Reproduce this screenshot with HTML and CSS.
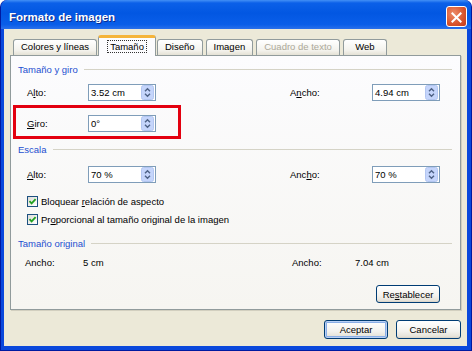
FILE: index.html
```html
<!DOCTYPE html>
<html lang="es">
<head>
    <meta charset="UTF-8">
    <title>Formato de imagen</title>
    <link rel="stylesheet" href="styles.css">
</head>
<body>
    <div class="window">
        <div class="titlebar">
            <span class="title">Formato de imagen</span>
            <span class="close">
                <svg width="21" height="21" viewBox="0 0 21 21"><path d="M6 6 L15 15 M15 6 L6 15" stroke="#fff" stroke-width="2.2" stroke-linecap="square"/></svg>
            </span>
        </div>

        <div class="client">
            <div class="tabs">
                <span class="tab">Colores y líneas</span>
                <span class="tab active"><span class="focus">Tamaño</span></span>
                <span class="tab">Diseño</span>
                <span class="tab">Imagen</span>
                <span class="tab disabled">Cuadro de texto</span>
                <span class="tab">Web</span>
            </div>

            <div class="panel">
                <div class="group first">Tamaño y giro</div>
                <div class="row">
                    <span>A<u>l</u>to:</span>
                    <div class="spin">3.52 cm <svg class="arrows" width="13" height="15" viewBox="0 0 13 15"><rect x=".5" y=".5" width="12" height="14" rx="2" fill="#c5d5fb" stroke="#b3c6f1"/><path d="M4 6.2 L6.5 3.8 L9 6.2 M4 8.8 L6.5 11.2 L9 8.8" stroke="#4d6185" stroke-width="1.4" fill="none"/></svg></div>
                    <span class="col-r">A<u>n</u>cho:</span>
                    <div class="spin">4.94 cm <svg class="arrows" width="13" height="15" viewBox="0 0 13 15"><rect x=".5" y=".5" width="12" height="14" rx="2" fill="#c5d5fb" stroke="#b3c6f1"/><path d="M4 6.2 L6.5 3.8 L9 6.2 M4 8.8 L6.5 11.2 L9 8.8" stroke="#4d6185" stroke-width="1.4" fill="none"/></svg></div>
                </div>
                <div class="row giro">
                    <span><u>G</u>iro:</span>
                    <div class="spin">0° <svg class="arrows" width="13" height="15" viewBox="0 0 13 15"><rect x=".5" y=".5" width="12" height="14" rx="2" fill="#c5d5fb" stroke="#b3c6f1"/><path d="M4 6.2 L6.5 3.8 L9 6.2 M4 8.8 L6.5 11.2 L9 8.8" stroke="#4d6185" stroke-width="1.4" fill="none"/></svg></div>
                </div>

                <div class="group">Escala</div>
                <div class="row">
                    <span><u>A</u>lto:</span>
                    <div class="spin">70 % <svg class="arrows" width="13" height="15" viewBox="0 0 13 15"><rect x=".5" y=".5" width="12" height="14" rx="2" fill="#c5d5fb" stroke="#b3c6f1"/><path d="M4 6.2 L6.5 3.8 L9 6.2 M4 8.8 L6.5 11.2 L9 8.8" stroke="#4d6185" stroke-width="1.4" fill="none"/></svg></div>
                    <span class="col-r">Anc<u>h</u>o:</span>
                    <div class="spin">70 % <svg class="arrows" width="13" height="15" viewBox="0 0 13 15"><rect x=".5" y=".5" width="12" height="14" rx="2" fill="#c5d5fb" stroke="#b3c6f1"/><path d="M4 6.2 L6.5 3.8 L9 6.2 M4 8.8 L6.5 11.2 L9 8.8" stroke="#4d6185" stroke-width="1.4" fill="none"/></svg></div>
                </div>
                <div class="check first-check">
                    <span class="box"><svg width="9" height="9" viewBox="0 0 9 9"><path d="M1.5 4.2 L3.6 6.4 L7.6 2.2" stroke="#21a121" stroke-width="1.8" fill="none"/></svg></span>
                    <span>Bloquear <u>r</u>elación de aspecto</span>
                </div>
                <div class="check">
                    <span class="box"><svg width="9" height="9" viewBox="0 0 9 9"><path d="M1.5 4.2 L3.6 6.4 L7.6 2.2" stroke="#21a121" stroke-width="1.8" fill="none"/></svg></span>
                    <span>Pr<u>o</u>porcional al tamaño original de la imagen</span>
                </div>

                <div class="group">Tamaño original</div>
                <div class="row original">
                    <span>Ancho:</span>
                    <span>5 cm</span>
                    <span>Ancho:</span>
                    <span>7.04 cm</span>
                </div>
                <div class="reset-row">
                    <span class="btn">Re<u>s</u>tablecer</span>
                </div>

                <!-- marca roja sobre el campo Giro -->
                <div class="highlight"></div>
            </div>

            <div class="actions">
                <span class="btn default">Aceptar</span>
                <span class="btn">Cancelar</span>
            </div>
        </div>
    </div>
</body>
</html>
```

FILE: styles.css
```css
body {
    margin: 0;
    background: #fff;
    font-family: "Liberation Sans", Arial, sans-serif;
    font-size: 9.5px;
    color: #000;
}
u { text-decoration-thickness: 1px; text-underline-offset: 1px; }

.window {
    width: 472px;
    height: 351px;
    box-sizing: border-box;
    display: flex;
    flex-direction: column;
    background: #0a48dc;
    border: 1px solid #0019a0;
    border-top: none;
    border-radius: 7px 7px 0 0;
}
.titlebar {
    height: 29px;
    flex: none;
    display: flex;
    align-items: center;
    padding: 4px 4px 0 8px;
    box-sizing: border-box;
    background: linear-gradient(#4390f6 0, #0b60e8 3px, #0257e2 45%, #0a5ee9 85%, #2a70eb 100%);
    border-radius: 7px 7px 0 0;
}
.title {
    flex: 1;
    color: #fff;
    font-weight: bold;
    font-size: 11.5px;
    text-shadow: 1px 1px 0 #0c2a8c;
}
.close {
    width: 21px;
    height: 21px;
    box-sizing: border-box;
    border: 1px solid #fff;
    border-radius: 3px;
    background: radial-gradient(circle at 35% 35%, #ec8c6a, #d9542c 60%, #c1391a);
    display: flex;
}

.client {
    flex: 1;
    margin: 0 4px 4px 3px;
    padding: 0 6px;
    background: #ece9d8;
    display: flex;
    flex-direction: column;
}

.tabs {
    height: 26px;
    flex: none;
    display: flex;
    align-items: flex-end;
    gap: 3px;
    padding-left: 3px;
}
.tab {
    height: 16px;
    box-sizing: border-box;
    min-width: 44px;
    padding: 0 7px;
    text-align: center;
    line-height: 14px;
    border: 1px solid #919b9c;
    border-bottom: none;
    border-radius: 3px 3px 0 0;
    background: linear-gradient(#ffffff, #f3f2ec 70%, #e4e1d5);
}
.tab.active {
    position: relative;
    z-index: 1;
    height: 21px;
    margin: 0 -2px -1px;
    padding: 0 8px;
    border-top: 3px solid #f5b43a;
    background: #fcfcfe;
    line-height: 14px;
}
.tab.disabled { color: #aca899; }
.focus {
    display: inline-block;
    border: 1px dotted #333;
    padding: 0 2px;
    line-height: 11px;
    margin-top: 2px;
}

.panel {
    position: relative;
    border: 1px solid #919b9c;
    box-shadow: 1px 1px 0 #d2cfbf;
    background: linear-gradient(#fcfcfe, #f6f5f1);
    padding-bottom: 6px;
}

.group {
    display: flex;
    align-items: center;
    gap: 6px;
    height: 14px;
    margin-top: 10px;
    padding: 0 8px 0 7px;
    color: #1d4fd0;
}
.group::after {
    content: "";
    flex: 1;
    height: 1px;
    background: #d5d3c6;
}
.group.first { margin-top: 6px; }

.row {
    display: grid;
    grid-template-columns: 61px 68px 134px 82px 68px;
    align-items: center;
    height: 17px;
    margin-top: 8px;
    padding-left: 16px;
}
.row.giro { margin-top: 14px; }
.group + .row { margin-top: 10px; }
.group.first + .row { margin-top: 8px; }
.col-r { grid-column: 4; }

.spin {
    height: 17px;
    box-sizing: border-box;
    border: 1px solid #7f9db9;
    background: #fff;
    display: flex;
    align-items: center;
    justify-content: space-between;
    padding: 0 1px 0 2px;
    line-height: 15px;
}

.check {
    display: flex;
    align-items: center;
    gap: 3px;
    height: 13px;
    margin-top: 5px;
    padding-left: 16px;
}
.check.first-check { margin-top: 12px; }
.box {
    width: 11px;
    height: 11px;
    box-sizing: border-box;
    border: 1px solid #1c5180;
    background: linear-gradient(135deg, #dcdcd7, #fff);
    display: flex;
    align-items: center;
    justify-content: center;
}

.row.original {
    grid-template-columns: 58px 209px 63px 1fr;
    margin-top: 4px;
    padding-left: 14px;
}

.reset-row {
    display: flex;
    justify-content: flex-end;
    margin-top: 14px;
    padding-right: 20px;
}

.btn {
    width: 64px;
    height: 18px;
    box-sizing: border-box;
    display: flex;
    align-items: center;
    justify-content: center;
    border: 1px solid #003c74;
    border-radius: 3px;
    background: linear-gradient(#ffffff, #f3f2ee 60%, #e6e3da 90%, #d6d0c5);
}
.btn.default { box-shadow: inset 0 0 0 1px #b9d0f5, inset 0 0 0 2px #8aaee6; }

.actions {
    display: flex;
    justify-content: flex-end;
    gap: 8px;
    margin-top: 10px;
}
.actions .btn { height: 19px; width: 64px; }
.actions .btn:last-child { width: 65px; }

.highlight {
    position: absolute;
    left: 2px;
    top: 49px;
    width: 168px;
    height: 34px;
    box-sizing: border-box;
    border: 3px solid #e3000f;
}
```
